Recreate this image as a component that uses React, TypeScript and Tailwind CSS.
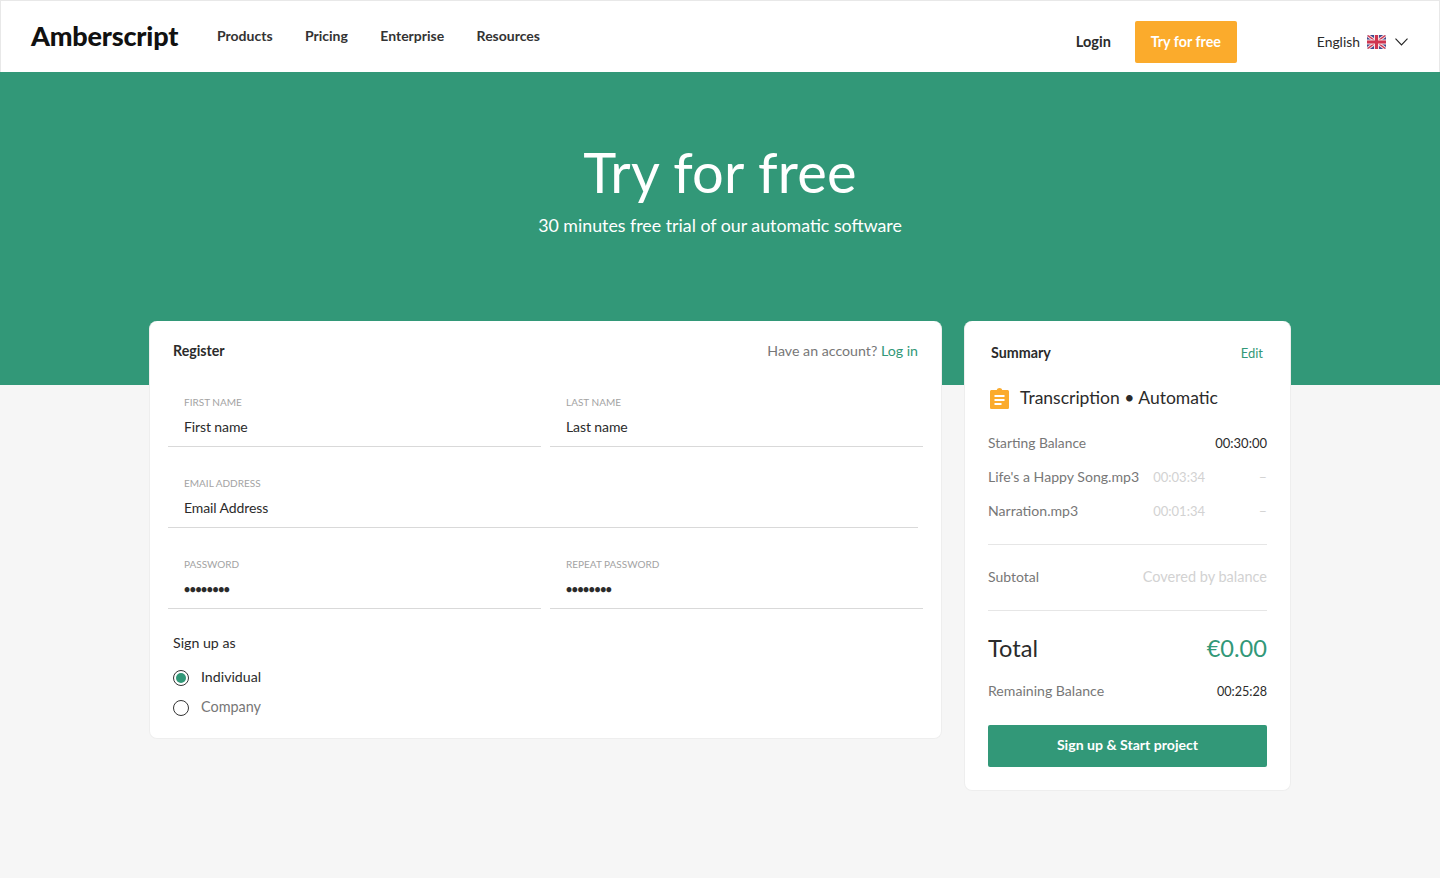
import React from "react";

function Flag() {
  return (
    <svg width="19" height="14" viewBox="0 0 19 14" className="block">
      <defs>
        <clipPath id="fc"><rect width="19" height="14" rx="2" /></clipPath>
      </defs>
      <g clipPath="url(#fc)">
        <rect width="19" height="14" fill="#3f4a8f" />
        <path d="M0 0L19 14M19 0L0 14" stroke="#f4dfe2" strokeWidth="3.4" />
        <path d="M0 0L19 14M19 0L0 14" stroke="#cf3550" strokeWidth="1.4" />
        <path d="M9.5 0V14M0 7H19" stroke="#f4dfe2" strokeWidth="5" />
        <path d="M9.5 0V14M0 7H19" stroke="#cf3550" strokeWidth="3" />
      </g>
    </svg>
  );
}

function ClipIcon() {
  return (
    <svg width="19" height="21" viewBox="0 0 19 21" className="block">
      <path
        d="M1.6 2H6.8C7 0.8 8.1 0 9.5 0S12 0.8 12.2 2H17.4C18.3 2 19 2.7 19 3.6V19.4C19 20.3 18.3 21 17.4 21H1.6C0.7 21 0 20.3 0 19.4V3.6C0 2.7 0.7 2 1.6 2Z"
        fill="#fbab2c"
      />
      <rect x="4.5" y="7" width="10" height="2" fill="#fff" />
      <rect x="4.5" y="11" width="10" height="2" fill="#fff" />
      <rect x="4.5" y="15" width="7" height="2" fill="#fff" />
    </svg>
  );
}

function Field({ label, value, dots, className }: { label: string; value: string; dots?: boolean; className: string }) {
  return (
    <div className={`h-[62px] border-b border-[#d9d9d9] pl-[16px] ${className}`}>
      <div className="pt-[9px] text-[10px] leading-[16px] text-[#a3a3a3]">{label}</div>
      <div className={`mt-[7px] leading-[20px] text-[#2b2b2b] ${dots ? "text-[10.5px] font-black tracking-[-0.4px]" : "text-[14px] tracking-[-0.1px]"}`}>{value}</div>
    </div>
  );
}

function Row({ label, time }: { label: string; time: string }) {
  return (
    <div className="flex h-[34px] items-center text-[14.1px] text-[#777]">
      <span className="flex-1 whitespace-nowrap">{label}</span>
      <span className="pt-[2px] text-[13px] text-[#d2d2d2]">{time}</span>
      <span className="w-[62px] text-right text-[#d2d2d2]">–</span>
    </div>
  );
}

export default function App() {
  return (
    <div className="min-h-[878px] bg-[#f6f6f6] font-['Lato','Liberation_Sans',sans-serif] text-[#2b2b2b]">
      <header className="flex h-[72px] items-center justify-between border border-[#e8e8e8] border-b-0 bg-white pl-[30px] pr-[31px]">
        <div className="flex items-center">
          <div className="w-[186px] pb-[3px] text-[27px] font-black leading-none tracking-[-0.2px] text-[#111]">Amberscript</div>
          <nav className="flex gap-[32.4px] pb-[3px] text-[14px] font-bold text-[#333]">
            <span>Products</span>
            <span>Pricing</span>
            <span>Enterprise</span>
            <span>Resources</span>
          </nav>
        </div>
        <div className="flex items-center pt-[11px]">
          <span className="mr-[24px] text-[14.5px] font-bold text-[#2b2b2b]">Login</span>
          <span className="flex h-[42px] w-[102px] items-center justify-center rounded-[2px] bg-[#fbab2c] text-[14.3px] font-bold text-white">Try for free</span>
          <span className="ml-[80px] mr-[7px] text-[13.9px] text-[#2b2b2b]">English</span>
          <Flag />
          <svg width="13" height="8" viewBox="0 0 13 8" fill="none" stroke="#222" strokeWidth="1.1" className="ml-[9px]">
            <path d="M0.5 0.7L6.5 6.9L12.5 0.7" />
          </svg>
        </div>
      </header>

      <section className="h-[313px] bg-[#329878] pt-[70px] text-center text-white">
        <h1 className="text-[56px] font-normal leading-[60px] tracking-[0.2px]">Try for free</h1>
        <p className="mt-[9px] text-[17.8px] leading-[28px]">30 minutes free trial of our automatic software</p>
      </section>

      <main className="-mt-[64px] flex items-start pl-[149px]">
        <div className="h-[418px] w-[793px] rounded-[8px] border border-[#eeeeee] border-t-0 bg-white pl-[18px]">
          <div className="flex h-[64px] items-center justify-between pb-[5px] pl-[5px] pr-[23px]">
            <span className="text-[14.2px] font-bold">Register</span>
            <span className="text-[14.2px] text-[#777]">
              Have an account? <span className="text-[#329878]">Log in</span>
            </span>
          </div>
          <div className="flex gap-[9px]">
            <Field label="FIRST NAME" value="First name" className="w-[373px]" />
            <Field label="LAST NAME" value="Last name" className="w-[373px]" />
          </div>
          <div className="mt-[19px]">
            <Field label="EMAIL ADDRESS" value="Email Address" className="w-[750px]" />
          </div>
          <div className="mt-[19px] flex gap-[9px]">
            <Field label="PASSWORD" value="••••••••" dots className="w-[373px]" />
            <Field label="REPEAT PASSWORD" value="••••••••" dots className="w-[373px]" />
          </div>
          <div className="pl-[5px]">
            <div className="mt-[24px] text-[14.2px] leading-[20px]">Sign up as</div>
            <div className="mt-[14px] flex h-[20px] items-center text-[14.2px]">
              <span className="mt-[2px] flex h-[16px] w-[16px] items-center justify-center rounded-full border border-[#333]">
                <span className="h-[10px] w-[10px] rounded-full bg-[#329878]" />
              </span>
              <span className="ml-[12px]">Individual</span>
            </div>
            <div className="mt-[10px] flex h-[20px] items-center text-[14.4px] text-[#777]">
              <span className="mt-[2px] h-[16px] w-[16px] rounded-full border border-[#333]" />
              <span className="ml-[12px]">Company</span>
            </div>
          </div>
        </div>

        <div className="ml-[22px] h-[470px] w-[327px] rounded-[8px] border border-[#eeeeee] border-t-0 bg-white px-[23px]">
          <div className="flex h-[64px] items-center justify-between px-[3px] text-[14.3px]">
            <span className="font-bold">Summary</span>
            <span className="pr-[1px] pt-[1px] text-[13px] text-[#329878]">Edit</span>
          </div>
          <div className="flex h-[26px] items-center pl-[2px] text-[17.5px]">
            <ClipIcon />
            <span className="ml-[11px]">Transcription • Automatic</span>
          </div>
          <div className="mt-[15px] flex h-[34px] items-center justify-between text-[13.8px] text-[#777]">
            <span>Starting Balance</span>
            <span className="pt-[2px] text-[13px] text-[#2b2b2b]">00:30:00</span>
          </div>
          <Row label="Life's a Happy Song.mp3" time="00:03:34" />
          <Row label="Narration.mp3" time="00:01:34" />
          <div className="mt-[16px] border-t border-[#e6e6e6]" />
          <div className="mt-[15px] flex h-[34px] items-center justify-between text-[14px] text-[#777]">
            <span className="pb-[2px]">Subtotal</span>
            <span className="text-[14.5px] text-[#d2d2d2]">Covered by balance</span>
          </div>
          <div className="mt-[16px] border-t border-[#e6e6e6]" />
          <div className="mt-[20px] flex h-[36px] items-center justify-between text-[23.6px]">
            <span>Total</span>
            <span className="text-[#329878]">€0.00</span>
          </div>
          <div className="mt-[7px] flex h-[34px] items-center justify-between text-[14.1px] text-[#777]">
            <span>Remaining Balance</span>
            <span className="pt-[2px] text-[12.6px] text-[#2b2b2b]">00:25:28</span>
          </div>
          <div className="mt-[17px] flex h-[42px] items-center justify-center rounded-[2px] bg-[#329878] pb-[2px] text-[14.1px] font-bold text-white">
            Sign up &amp; Start project
          </div>
        </div>
      </main>
    </div>
  );
}
